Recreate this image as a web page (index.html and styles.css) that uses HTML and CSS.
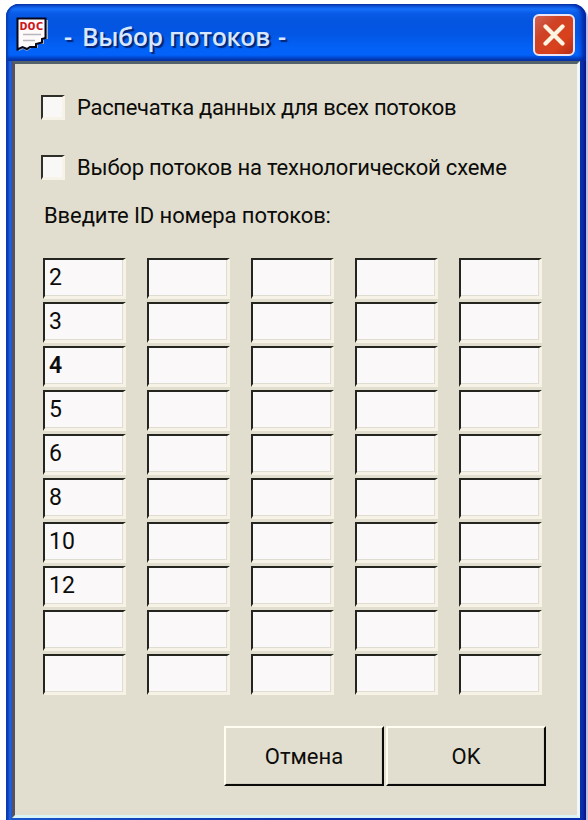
FILE: index.html
```html
<!DOCTYPE html>
<html lang="ru">
<head>
<meta charset="utf-8">
<title>Выбор потоков</title>
<link rel="stylesheet" href="styles.css">
</head>
<body>
<div class="window">
  <header class="titlebar">
    <svg class="doc" width="34" height="36" viewBox="0 0 34 36">
      <path d="M3 3H32V22H28V27H22V31L17 30L11 34L7 32L3 34Z" fill="#9fb0c4"/>
      <path d="M1.500 1.500H29.500V21L26 22V25.500L20 27V30H14L11 32L6.500 30L1.500 32.500Z" fill="#fffafa" stroke="#05051c" stroke-width="2"/>
      <path d="M7 17.500H25M7 23.500H19" stroke="#b9b5bd" stroke-width="1.300"/>
      <text class="doc-text" x="3.500" y="12.500" textLength="24" lengthAdjust="spacingAndGlyphs">DOC</text>
    </svg>
    <h1 class="title"><span>-</span><span class="name">Выбор потоков</span><span>-</span></h1>
    <button class="close" aria-label="Закрыть"><svg width="22" height="22" viewBox="0 0 22 22"><path d="M2.500 2.500L19.500 19.500M19.500 2.500L2.500 19.500" stroke="#fff4e2" stroke-width="4.200" stroke-linecap="round"/></svg></button>
  </header>
  <main class="client">
    <label class="check"><span class="box"></span><span class="t1">Распечатка данных для всех потоков</span></label>
    <label class="check second"><span class="box"></span><span class="t2">Выбор потоков на технологической схеме</span></label>
    <p class="prompt">Введите ID номера потоков:</p>
    <div class="grid">
      <div class="field">2</div><div class="field"></div><div class="field"></div><div class="field"></div><div class="field"></div>
      <div class="field">3</div><div class="field"></div><div class="field"></div><div class="field"></div><div class="field"></div>
      <div class="field strong">4</div><div class="field"></div><div class="field"></div><div class="field"></div><div class="field"></div>
      <div class="field">5</div><div class="field"></div><div class="field"></div><div class="field"></div><div class="field"></div>
      <div class="field">6</div><div class="field"></div><div class="field"></div><div class="field"></div><div class="field"></div>
      <div class="field">8</div><div class="field"></div><div class="field"></div><div class="field"></div><div class="field"></div>
      <div class="field">10</div><div class="field"></div><div class="field"></div><div class="field"></div><div class="field"></div>
      <div class="field">12</div><div class="field"></div><div class="field"></div><div class="field"></div><div class="field"></div>
      <div class="field"></div><div class="field"></div><div class="field"></div><div class="field"></div><div class="field"></div>
      <div class="field"></div><div class="field"></div><div class="field"></div><div class="field"></div><div class="field"></div>
    </div>
    <div class="actions"><button class="btn cancel">Отмена</button><button class="btn ok">OK</button></div>
  </main>
</div>
</body>
</html>
```
FILE: styles.css
```css
* { box-sizing: border-box; }
body { margin: 0; height: 820px; padding: 4px 2px 0 6px; background: #fff; overflow: hidden; font-family: Roboto, "Liberation Sans", sans-serif; color: #0c0c0a; }
.window { height: 816px; padding: 0 6px 2px 6px; border-radius: 13px 13px 0 0; background: linear-gradient(90deg, #0a36a8 0, #0a40c0 2px, #2465dc 4px, #1a55cc 6px, #0a2fae 50%, #0a2fae calc(100% - 5px), #0a2aa8 calc(100% - 3px), #06127a 100%); box-shadow: 2px 2px 1px #b9b9e2; display: flex; flex-direction: column; }
.titlebar { height: 57px; margin: 0 -6px; padding: 0 11px 0 10px; display: flex; align-items: flex-start; flex: none; border-radius: 13px 13px 0 0; background: linear-gradient(#0a3ca8 0, #0f5ae0 2px, #1670f8 5px, #0a5ce8 9px, #0455e0 16px, #0356e4 30px, #0361f6 43px, #0262fa 51px, #0248cc 54px, #0a359c 57px); box-shadow: inset 2px 0 2px #0a3cae, inset -4px 0 4px #0622a0; }
.doc { margin-top: 13px; }
.doc-text { font: 700 10.5px "DejaVu Sans Mono", monospace; fill: #cc1820; }
.title { margin: 14px 0 0 14px; display: flex; gap: 10px; font: 600 25px/36px "Open Sans", sans-serif; color: #d7e7ff; text-shadow: 2px 2px 1px #06236e; }
.name { width: 186px; white-space: nowrap; letter-spacing: -0.4px; }
.close { margin: 10px 0 0 auto; width: 42px; height: 42px; padding: 0; border: 2px solid #e8e4f6; border-radius: 6px; background: linear-gradient(135deg, #ce6455 0, #cf4224 35%, #d9411c 70%, #b52d18 100%); display: grid; place-items: center; }
.client { flex: 1; padding: 28px 30px 0 26px; background: #e1decf; border-style: solid; border-color: #53616a #f0f8fc #daf3f5 #555062; border-width: 3px 3px 3px 3px; }
.check { display: flex; align-items: center; height: 30px; font-size: 22px; white-space: nowrap; }
.second { margin-top: 30px; }
.t1 { letter-spacing: -0.3px; }
.t2 { letter-spacing: -0.2px; }
.box { width: 24px; height: 25px; margin-right: 12px; background: #faf8f7; border: 2px solid #302e28; border-width: 2px 3px 3px 2px; border-right-color: #f7f3e8; border-bottom-color: #f7f3e8; }
.prompt { margin: 19px 0 0 3px; font-size: 22px; line-height: 30px; letter-spacing: -0.1px; white-space: nowrap; }
.grid { margin-top: 27px; margin-left: 2px; display: grid; grid-template-columns: repeat(5, 83px); grid-auto-rows: 41px; gap: 3px 21px; }
.field { padding: 0 0 0 4px; border: 2px solid #25251f; border-right: 3px solid #f6f3e6; border-bottom: 3px solid #f6f3e6; background: #faf8f8; box-shadow: inset -1px -1px #dfddd2; font-size: 23px; line-height: 36px; }
.strong { font-weight: 600; }
.actions { display: flex; gap: 2px; margin: 31px 0 0 183px; }
.btn { width: 160px; height: 60px; padding: 0; font: 22px Roboto, sans-serif; color: #0c0c0a; background: #e1decf; border: 2px solid #0a0a08; border-top-color: #fffcf0; border-left-color: #fffcf0; box-shadow: inset -1px -1px #d3cfc1; }
```
